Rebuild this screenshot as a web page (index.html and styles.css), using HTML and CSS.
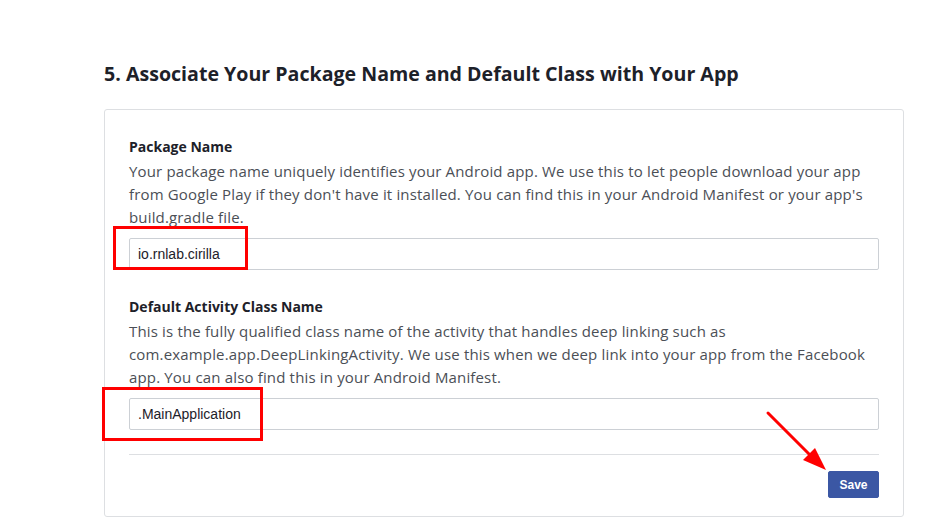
FILE: index.html
```html
<!DOCTYPE html>
<html lang="en">
<head>
  <meta charset="UTF-8">
  <title>Associate Your Package Name</title>
  <link rel="stylesheet" href="styles.css">
</head>
<body>
  <div class="page">
    <h2 class="step-title">5. Associate Your Package Name and Default Class with Your App</h2>

    <div class="card">
      <div class="field">
        <div class="label">Package Name</div>
        <p class="help">Your package name uniquely identifies your Android app. We use this to let people download your app from Google Play if they don't have it installed. You can find this in your Android Manifest or your app's build.gradle file.</p>
        <div class="input-wrap">
          <input type="text" class="text-input" value="io.rnlab.cirilla">
          <span class="mark mark-package"></span>
        </div>
      </div>

      <div class="field">
        <div class="label">Default Activity Class Name</div>
        <p class="help">This is the fully qualified class name of the activity that handles deep linking such as com.example.app.DeepLinkingActivity. We use this when we deep link into your app from the Facebook app. You can also find this in your Android Manifest.</p>
        <div class="input-wrap">
          <input type="text" class="text-input" value=".MainApplication">
          <span class="mark mark-class"></span>
        </div>
      </div>

      <div class="footer">
        <svg class="arrow" width="70" height="70" viewBox="0 0 70 70">
          <line x1="4" y1="4" x2="52" y2="52" stroke="#f00" stroke-width="3" stroke-linecap="round"/>
          <polygon points="62,61 39,51 51,39" fill="#f00"/>
        </svg>
        <button class="save">Save</button>
      </div>
    </div>
  </div>
</body>
</html>
```

FILE: styles.css
```css
body {
  margin: 0;
  background: #fff;
  font-family: 'Open Sans', sans-serif;
  color: #4b4f56;
}

.page {
  width: 800px;
  padding: 61px 0 0 104px;
}

.step-title {
  margin: 0 0 22px;
  font-size: 19.6px;
  font-weight: 700;
  color: #1d2129;
  line-height: 26px;
}

.card {
  border: 1px solid #dddfe2;
  border-radius: 3px;
  padding: 27px 24px 18px;
}

.field {
  margin-bottom: 27px;
}

.label {
  font-size: 14px;
  font-weight: 700;
  color: #1d2129;
  line-height: 20px;
}

.help {
  margin: 3px 0 9px;
  font-size: 15px;
  line-height: 23px;
  letter-spacing: 0.16px;
}

.input-wrap {
  position: relative;
}

.text-input {
  display: block;
  box-sizing: border-box;
  width: 100%;
  height: 32px;
  padding: 0 8px;
  border: 1px solid #ccd0d5;
  border-radius: 2px;
  font-family: 'Liberation Sans', Arial, sans-serif;
  font-size: 14px;
  color: #1d2129;
}

.mark {
  position: absolute;
  border: 3px solid #f00;
}

.mark-package {
  left: -16px;
  top: -12px;
  width: 129px;
  height: 38px;
}

.mark-class {
  left: -27px;
  top: -11px;
  width: 155px;
  height: 48px;
}

.footer {
  position: relative;
  border-top: 1px solid #dddfe2;
  margin-top: -3px;
  padding-top: 16px;
  display: flex;
  justify-content: flex-end;
}

.arrow {
  position: absolute;
  left: 635px;
  top: -46px;
}

.save {
  background: #3b57a4;
  color: #fff;
  border: 1px solid #3b57a4;
  border-radius: 2px;
  height: 27px;
  width: 51px;
  font-family: 'Liberation Sans', Arial, sans-serif;
  font-size: 12px;
  font-weight: 700;
}
```
